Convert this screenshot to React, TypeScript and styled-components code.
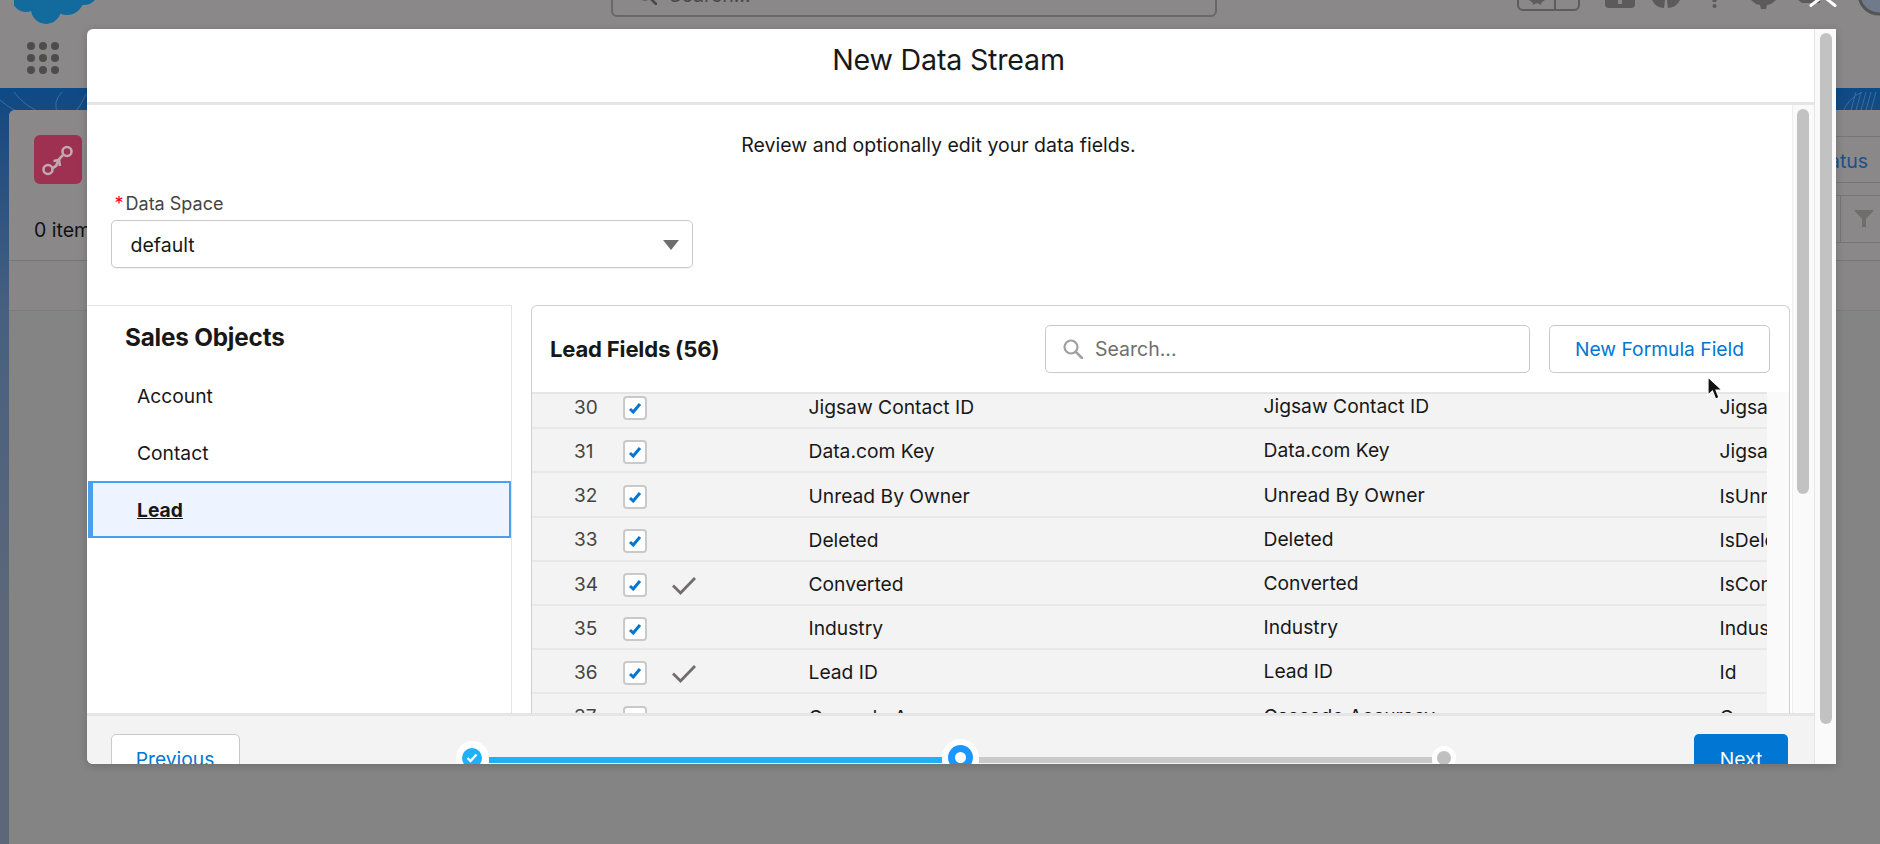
import React from 'react'
import styled, { createGlobalStyle } from 'styled-components'

const GlobalStyle = createGlobalStyle`
    html, body {
        margin: 0;
        padding: 0;
        height: 100%;
        background: #848484;
        overflow: hidden;
        font-family: Inter, "Noto Sans", "Liberation Sans", sans-serif;
    }
`

const Page = styled.div`
    position: relative;
    width: 1880px;
    height: 844px;
    overflow: hidden;
    display: flex;
    flex-direction: column;
    background: #848484;
`

/* dimmed app behind the modal */

const AppHeader = styled.header`
    height: 88px;
    background: #8a8888;
    flex-shrink: 0;
`

const TopRow = styled.div`
    display: flex;
    align-items: flex-start;
    height: 29px;
    padding-left: 14px;
    overflow: hidden;
`

const Logo = styled.svg`
    flex-shrink: 0;
`

const GlobalSearch = styled.div`
    display: flex;
    align-items: center;
    gap: 12px;
    box-sizing: border-box;
    width: 606px;
    height: 48px;
    margin: -31px 0 0 513px;
    padding: 3px 0 0 24px;
    border: 2px solid #696868;
    border-radius: 6px;
    color: #4a4949;
    font-size: 19.5px;
    flex-shrink: 0;
`

const Favorites = styled.div`
    display: flex;
    box-sizing: border-box;
    width: 63px;
    height: 40px;
    margin: -29px 0 0 300px;
    border: 2px solid #5e5c5c;
    border-radius: 6px;
    flex-shrink: 0;
`

const FavoriteStar = styled.div`
    display: flex;
    align-items: flex-end;
    justify-content: center;
    width: 35px;
    padding-bottom: 4px;
    border-right: 2px solid #5e5c5c;
`

const Utility = styled.svg<{ $gap: number }>`
    flex-shrink: 0;
    margin-left: ${p => p.$gap}px;
`

const Launcher = styled.div`
    display: grid;
    grid-template-columns: repeat(3, 8px);
    gap: 4px;
    width: 32px;
    margin: 13px 0 0 27px;
`

const LauncherDot = styled.span`
    width: 8px;
    height: 8px;
    border-radius: 50%;
    background: #4f4c4c;
`

const Backdrop = styled.main`
    position: relative;
    flex: 1;
    display: flex;
    padding: 22px 0 0 9px;
    background: linear-gradient(180deg, #0f4a84 0, #1a4a80 30px, #47607f 220px, #5c6779 520px);
    border-top: 4px solid #0c4a88;
    box-sizing: border-box;
    overflow: hidden;
`

const Topo = styled.svg`
    position: absolute;
    top: 0;
    left: 0;
`

const Card = styled.section`
    position: relative;
    flex: 1;
    margin: -4px -20px 0 0;
    border-radius: 6px 0 0 0;
    background: #848484;
`

const CardTop = styled.div`
    box-sizing: border-box;
    height: 151px;
    padding: 25px 0 0 25px;
    background: #8a8888;
    border-bottom: 1px solid #777676;
    border-radius: 6px 0 0 0;
`

const CardRow = styled.div<{ $top?: number }>`
    display: flex;
    align-items: center;
    justify-content: space-between;
    margin-top: ${p => p.$top ?? 0}px;
`

const ObjectIcon = styled.div`
    display: flex;
    align-items: center;
    justify-content: center;
    width: 48px;
    height: 49px;
    border-radius: 6px;
    background: #9e3052;
`

const StatusButton = styled.div`
    box-sizing: border-box;
    display: flex;
    align-items: center;
    width: 90px;
    height: 47px;
    padding-top: 2px;
    border-top: 1px solid #777676;
    border-bottom: 1px solid #777676;
    color: #1d4f8c;
    font-size: 19.5px;
`

const ItemCount = styled.div`
    margin-top: 21px;
    color: #111;
    font-size: 19.5px;
`

const FilterGroup = styled.div`
    display: flex;
    height: 46px;
    border-top: 1px solid #777676;
    border-bottom: 1px solid #777676;
`

const FilterGhost = styled.div`
    width: 20px;
    border-right: 1px solid #777676;
`

const FilterButton = styled.div`
    display: flex;
    align-items: center;
    justify-content: center;
    width: 46px;
    margin-right: 13px;
`

const CardTableHead = styled.div`
    height: 49px;
    background: #888686;
    border-bottom: 1px solid #7d7c7c;
`

/* modal */

const Modal = styled.div`
    position: absolute;
    top: 29px;
    left: 87px;
    width: 1749px;
    height: 734.5px;
    display: grid;
    grid-template-columns: 1fr 22px;
    background: #fff;
    border-radius: 6px 0 0 6px;
    box-shadow: 0 2px 8px rgba(0, 0, 0, 0.18);
    overflow: hidden;
`

const ModalColumn = styled.div`
    display: flex;
    flex-direction: column;
    min-width: 0;
    min-height: 0;
`

const ModalHeader = styled.div`
    display: flex;
    align-items: center;
    justify-content: center;
    box-sizing: border-box;
    height: 76px;
    padding-bottom: 13px;
    border-bottom: 3px solid #e5e5e5;
    flex-shrink: 0;
`

const ModalTitle = styled.h1`
    margin: 0 4px 0 0;
    color: #181818;
    font-size: 28.6px;
    font-weight: 400;
    letter-spacing: -0.2px;
`

const ModalBody = styled.div`
    flex: 1;
    display: flex;
    min-height: 0;
`

const ScrollContent = styled.div`
    flex: 1;
    display: flex;
    flex-direction: column;
    min-width: 0;
    padding-top: 30px;
    box-sizing: border-box;
`

const Instructions = styled.p`
    margin: 0 0 0 -2px;
    color: #181818;
    font-size: 19.5px;
    line-height: 20px;
    text-align: center;
`

const Field = styled.div`
    margin: 36px 0 37px 23.5px;
    width: 582px;
`

const FieldLabel = styled.label`
    display: flex;
    gap: 2px;
    height: 24px;
    margin-bottom: 5px;
    padding-left: 4px;
    align-items: center;
    color: #444;
    font-size: 18px;
`

const Required = styled.span`
    color: #ea001e;
`

const Select = styled.div`
    display: flex;
    align-items: center;
    justify-content: space-between;
    box-sizing: border-box;
    height: 48px;
    padding: 2px 13px 0 19px;
    border: 1px solid #c9c9c9;
    border-radius: 5px;
    color: #181818;
    font-size: 19.5px;
    box-shadow: 0 1px 1px rgba(0, 0, 0, 0.06);
`

const Panels = styled.div`
    flex: 1;
    display: flex;
    gap: 19px;
    min-height: 0;
    padding-right: 2px;
`

const SidePanel = styled.nav`
    box-sizing: border-box;
    width: 425px;
    padding-top: 16px;
    border-top: 1px solid #e5e5e5;
    border-right: 1px solid #e5e5e5;
    flex-shrink: 0;
`

const SideTitle = styled.h2`
    margin: 0 0 14px 38px;
    height: 31px;
    color: #181818;
    font-size: 24.3px;
    line-height: 31px;
    font-weight: 700;
    letter-spacing: -0.2px;
`

const SideItem = styled.div<{ $active?: boolean }>`
    display: flex;
    align-items: center;
    box-sizing: border-box;
    height: 57px;
    margin: ${p => (p.$active ? '0 0 0 1px' : '0')};
    padding-left: ${p => (p.$active ? '44px' : '50px')};
    border: ${p => (p.$active ? '2px solid #4aa0ec' : 'none')};
    border-left: ${p => (p.$active ? '5px solid #4aa0ec' : 'none')};
    background: ${p => (p.$active ? '#eef4ff' : 'transparent')};
    color: #181818;
    font-size: 19.25px;
    font-weight: ${p => (p.$active ? 700 : 400)};
    text-decoration: ${p => (p.$active ? 'underline' : 'none')};
`

const FieldsPanel = styled.section`
    flex: 1;
    display: flex;
    flex-direction: column;
    min-width: 0;
    border: 1px solid #d0d0d0;
    border-bottom: none;
    border-radius: 6px 6px 0 0;
    background: #fafafa;
`

const Toolbar = styled.div`
    display: flex;
    align-items: center;
    box-sizing: border-box;
    height: 86px;
    padding: 0 19px 0 18px;
    background: #fff;
    border-radius: 6px 6px 0 0;
    flex-shrink: 0;
`

const ToolbarTitle = styled.h3`
    flex: 1;
    margin: 0;
    color: #181818;
    font-size: 22.1px;
    font-weight: 700;
    letter-spacing: -0.2px;
`

const SearchBox = styled.div`
    display: flex;
    align-items: center;
    gap: 12px;
    box-sizing: border-box;
    width: 485px;
    height: 48px;
    padding-left: 17px;
    border: 1px solid #c9c9c9;
    border-radius: 5px;
    color: #706e6b;
    font-size: 19.5px;
`

const OutlineButton = styled.div`
    display: flex;
    align-items: center;
    justify-content: center;
    box-sizing: border-box;
    height: 48px;
    border: 1px solid #c9c9c9;
    border-radius: 5px;
    background: #fff;
    color: #0176d3;
    font-size: 19.25px;
`

const FormulaButton = styled(OutlineButton)`
    width: 221px;
    margin-left: 19px;
`

const TableViewport = styled.div`
    flex: 1;
    width: 1234.5px;
    min-height: 0;
    border-top: 2px solid #e5e5e5;
    overflow: hidden;
    background: #f3f3f3;
`

const TableRows = styled.div`
    margin-top: -9px;
`

const Row = styled.div`
    display: grid;
    grid-template-columns: 90.5px 49px 137px 455px 456px 1fr;
    align-items: center;
    box-sizing: border-box;
    height: 44.2px;
    padding-top: 2.4px;
    border-bottom: 2px solid #e8e8e8;
    color: #181818;
    font-size: 19.25px;
    white-space: nowrap;
    overflow: hidden;
`

const RowNumber = styled.div`
    padding-left: 42px;
    color: #444;
    font-size: 19px;
`

const CheckBox = styled.div`
    display: flex;
    align-items: center;
    justify-content: center;
    box-sizing: border-box;
    width: 24px;
    height: 24px;
    margin-top: 2px;
    border: 2px solid #c9c9c9;
    border-radius: 4px;
    background: #fff;
`

const KeyCheck = styled.div`
    display: flex;
    margin-top: 3px;
`

const SourceCell = styled.div`
    margin-top: -2px;
`

const ApiCell = styled.div`
    overflow: hidden;
`

const ModalFooter = styled.div`
    display: flex;
    align-items: flex-start;
    box-sizing: border-box;
    height: 50.5px;
    padding: 18px 26px 0 23.5px;
    border-top: 3px solid #e5e5e5;
    background: #f3f3f3;
    overflow: hidden;
    flex-shrink: 0;
`

const PreviousButton = styled(OutlineButton)`
    width: 129px;
    padding-top: 2px;
    flex-shrink: 0;
`

const NextButton = styled.div`
    display: flex;
    align-items: center;
    justify-content: center;
    box-sizing: border-box;
    width: 94px;
    height: 48px;
    padding-top: 2px;
    margin-left: auto;
    border-radius: 5px;
    background: #0176d3;
    color: #fff;
    font-size: 19.25px;
    flex-shrink: 0;
`

const Stepper = styled.div`
    display: flex;
    align-items: center;
    margin: 5px 0 0 216.4px;
`

const StepHalo = styled.div<{ $size: number }>`
    display: flex;
    align-items: center;
    justify-content: center;
    width: ${p => p.$size}px;
    height: ${p => p.$size}px;
    border-radius: 50%;
    background: #fff;
    flex-shrink: 0;
`

const StepDone = styled.div`
    display: flex;
    align-items: center;
    justify-content: center;
    width: 20px;
    height: 20px;
    border-radius: 50%;
    background: #1fb0f6;
`

const StepCurrent = styled.div`
    box-sizing: border-box;
    width: 25px;
    height: 25px;
    border: 7px solid #1b96ff;
    border-radius: 50%;
    background: #fff;
`

const StepTodo = styled.div`
    width: 14px;
    height: 14px;
    border-radius: 50%;
    background: #c0c0c0;
`

const StepLine = styled.div<{ $done?: boolean }>`
    width: 453px;
    height: 6px;
    margin-top: 5px;
    background: ${p => (p.$done ? '#1fb0f6' : '#c9c9c9')};
`

const InnerGutter = styled.div`
    box-sizing: border-box;
    width: 22px;
    padding: 4px 0 0 4px;
    border-left: 1px solid #eee;
    background: #fafafa;
    flex-shrink: 0;
`

const OuterGutter = styled.div`
    box-sizing: border-box;
    padding: 4px 0 0 5px;
    border-left: 1px solid #e5e5e5;
    background: #fafafa;
`

const Thumb = styled.div<{ $height: number }>`
    width: 12px;
    height: ${p => p.$height}px;
    border-radius: 6px;
    background: #c2c2c2;
`

const Pointer = styled.svg`
    position: absolute;
    top: 376px;
    left: 1706px;
`

const CloseCross = styled.svg`
    position: absolute;
    top: 0;
    left: 1808px;
`

const BlueTick = () => (
    <svg width="14" height="12" viewBox="0 0 14 12">
        <path d="M2 7 L5.2 10 L12 2" fill="none" stroke="#0176d3" strokeWidth="3" />
    </svg>
)

const GrayTick = () => (
    <svg width="24" height="18" viewBox="0 0 24 18">
        <path d="M1 8.5 L8.5 16 L23 1" fill="none" stroke="#706e6b" strokeWidth="2.8" />
    </svg>
)

const Magnifier = ({ color, size }: { color: string; size: number }) => (
    <svg width={size} height={size} viewBox="0 0 20 20">
        <circle cx="8" cy="8" r="6.5" fill="none" stroke={color} strokeWidth="2.2" />
        <path d="M12.8 12.8 L19 19" stroke={color} strokeWidth="2.6" strokeLinecap="round" />
    </svg>
)

const rows = [
    { n: 30, label: 'Jigsaw Contact ID', api: 'JigsawContactId', key: false },
    { n: 31, label: 'Data.com Key', api: 'Jigsaw', key: false },
    { n: 32, label: 'Unread By Owner', api: 'IsUnreadByOwner', key: false },
    { n: 33, label: 'Deleted', api: 'IsDeleted', key: false },
    { n: 34, label: 'Converted', api: 'IsConverted', key: true },
    { n: 35, label: 'Industry', api: 'Industry', key: false },
    { n: 36, label: 'Lead ID', api: 'Id', key: true },
]

const App = () => {
    return (
        <Page>
            <GlobalStyle />

            <AppHeader>
                <TopRow>
                    <Logo width="84" height="24" viewBox="0 0 84 24">
                        <g fill="#136a9c">
                            <circle cx="12" cy="-2" r="14" />
                            <circle cx="32" cy="9" r="15" />
                            <circle cx="53" cy="-2" r="17" />
                            <circle cx="70" cy="-9" r="14" />
                        </g>
                    </Logo>
                    <GlobalSearch>
                        <Magnifier color="#4a4949" size={20} />
                        Search...
                    </GlobalSearch>
                    <Favorites>
                        <FavoriteStar>
                            <svg width="16" height="5" viewBox="0 0 16 5">
                                <path d="M0 0 H16 L12 3 L12.5 5 L8 3 L3.5 5 L4 3 Z" fill="#5e5c5c" />
                            </svg>
                        </FavoriteStar>
                    </Favorites>
                    <Utility $gap={25} width="30" height="9" viewBox="0 0 30 9">
                        <path d="M0 0 H30 V4 Q30 8 26 8 H4 Q0 8 0 4 Z" fill="#5c5a5a" />
                        <rect x="13" y="0" width="4" height="4" fill="#8a8888" />
                    </Utility>
                    <Utility $gap={17} width="28" height="8" viewBox="0 0 28 8">
                        <path d="M0 0 H13 L12 8 Q4 8 0 0 Z M15 0 H28 Q25 7 16 8 Z" fill="#5c5a5a" />
                    </Utility>
                    <Utility $gap={32} width="5" height="8" viewBox="0 0 5 8">
                        <rect x="0.5" y="0" width="4" height="2" fill="#5c5a5a" />
                        <circle cx="2.5" cy="6" r="2" fill="#5c5a5a" />
                    </Utility>
                    <Utility $gap={34} width="25" height="9" viewBox="0 0 25 9">
                        <path d="M0 0 H25 L20 4 L16 5 L15 9 H10 L9 5 L5 4 Z" fill="#5c5a5a" />
                    </Utility>
                    <Utility $gap={22} width="22" height="8" viewBox="0 0 22 8">
                        <path d="M0 0 H22 V3 H4 Z M12 4 H17 Q16 7 14 7 Q12 7 12 4 Z" fill="#5c5a5a" />
                    </Utility>
                    <Utility $gap={36} width="27" height="16" viewBox="0 0 27 16">
                        <circle cx="23" cy="-6" r="20" fill="#6f7a8a" stroke="#545454" strokeWidth="3" />
                    </Utility>
                </TopRow>
                <Launcher>
                    {Array.from({ length: 9 }, (_, i) => (
                        <LauncherDot key={i} />
                    ))}
                </Launcher>
            </AppHeader>

            <Backdrop>
                <Topo width="1880" height="22" viewBox="0 0 1880 22">
                    <g fill="none" stroke="#3b6ea3" strokeWidth="1">
                        <path d="M0 8 Q14 20 26 22 M14 0 Q24 14 44 22 M58 22 Q52 10 62 0 M74 22 Q82 12 86 2" />
                        <path d="M1842 22 Q1848 6 1862 0 M1850 22 L1856 0 M1855 22 L1861 0 M1860 22 L1866 0 M1865 22 L1871 0 M1870 22 L1876 0" />
                    </g>
                </Topo>
                <Card>
                    <CardTop>
                        <CardRow>
                            <ObjectIcon>
                                <svg width="34" height="34" viewBox="0 0 34 34">
                                    <g fill="none" stroke="#bfaab0" strokeWidth="2.6">
                                        <circle cx="7" cy="26.5" r="4.5" />
                                        <circle cx="26" cy="8.5" r="4.5" />
                                        <path d="M11.5 25 Q15 24 16 21 L17 18 Q18 16 22 12" />
                                        <path d="M12.5 18 L18 17 L19 23" />
                                    </g>
                                </svg>
                            </ObjectIcon>
                            <StatusButton>Status</StatusButton>
                        </CardRow>
                        <CardRow $top={11}>
                            <ItemCount>0 items</ItemCount>
                            <FilterGroup>
                                <FilterGhost />
                                <FilterButton>
                                    <svg width="20" height="20" viewBox="0 0 20 20">
                                        <path d="M0 1 H20 L12 10 V18 H8 V10 Z" fill="#6f6e6d" />
                                    </svg>
                                </FilterButton>
                            </FilterGroup>
                        </CardRow>
                    </CardTop>
                    <CardTableHead />
                </Card>
            </Backdrop>

            <Modal>
                <ModalColumn>
                    <ModalHeader>
                        <ModalTitle>New Data Stream</ModalTitle>
                    </ModalHeader>
                    <ModalBody>
                        <ScrollContent>
                            <Instructions>Review and optionally edit your data fields.</Instructions>
                            <Field>
                                <FieldLabel>
                                    <Required>*</Required>Data Space
                                </FieldLabel>
                                <Select>
                                    default
                                    <svg width="16" height="10" viewBox="0 0 16 10">
                                        <path d="M0 0 H16 L8 10 Z" fill="#706e6b" />
                                    </svg>
                                </Select>
                            </Field>
                            <Panels>
                                <SidePanel>
                                    <SideTitle>Sales Objects</SideTitle>
                                    <SideItem>Account</SideItem>
                                    <SideItem>Contact</SideItem>
                                    <SideItem $active>Lead</SideItem>
                                </SidePanel>
                                <FieldsPanel>
                                    <Toolbar>
                                        <ToolbarTitle>Lead Fields (56)</ToolbarTitle>
                                        <SearchBox>
                                            <Magnifier color="#a0a0a0" size={20} />
                                            Search...
                                        </SearchBox>
                                        <FormulaButton>New Formula Field</FormulaButton>
                                    </Toolbar>
                                    <TableViewport>
                                        <TableRows>
                                            {rows.map(row => (
                                                <Row key={row.n}>
                                                    <RowNumber>{row.n}</RowNumber>
                                                    <CheckBox>
                                                        <BlueTick />
                                                    </CheckBox>
                                                    <KeyCheck>{row.key && <GrayTick />}</KeyCheck>
                                                    <div>{row.label}</div>
                                                    <SourceCell>{row.label}</SourceCell>
                                                    <ApiCell>{row.api}</ApiCell>
                                                </Row>
                                            ))}
                                            <Row>
                                                <RowNumber>37</RowNumber>
                                                <CheckBox />
                                                <KeyCheck />
                                                <div>Cascade Accuracy</div>
                                                <SourceCell>Cascade Accuracy</SourceCell>
                                                <ApiCell>CascadeAccuracy</ApiCell>
                                            </Row>
                                        </TableRows>
                                    </TableViewport>
                                </FieldsPanel>
                            </Panels>
                        </ScrollContent>
                        <InnerGutter>
                            <Thumb $height={385} />
                        </InnerGutter>
                    </ModalBody>
                    <ModalFooter>
                        <PreviousButton>Previous</PreviousButton>
                        <Stepper>
                            <StepHalo $size={33}>
                                <StepDone>
                                    <svg width="12" height="10" viewBox="0 0 12 10">
                                        <path d="M1.5 5 L4.5 8 L10.5 1.5" fill="none" stroke="#fff" strokeWidth="2.4" />
                                    </svg>
                                </StepDone>
                            </StepHalo>
                            <StepLine $done />
                            <StepHalo $size={37}>
                                <StepCurrent />
                            </StepHalo>
                            <StepLine />
                            <StepHalo $size={24}>
                                <StepTodo />
                            </StepHalo>
                        </Stepper>
                        <NextButton>Next</NextButton>
                    </ModalFooter>
                </ModalColumn>
                <OuterGutter>
                    <Thumb $height={691} />
                </OuterGutter>
            </Modal>

            <Pointer width="18" height="26" viewBox="0 0 18 26">
                <path d="M2 1 L2 19 L6.5 15 L9.5 23 L13 21.5 L10 14 L16 14 Z" fill="#111" stroke="#fff" strokeWidth="1.2" />
            </Pointer>

            <CloseCross width="30" height="7" viewBox="0 0 30 7">
                <path d="M3 5.5 L15 -4 M27 5.5 L15 -4" stroke="#fff" strokeWidth="3" strokeLinecap="round" />
            </CloseCross>
        </Page>
    )
}

export default App
